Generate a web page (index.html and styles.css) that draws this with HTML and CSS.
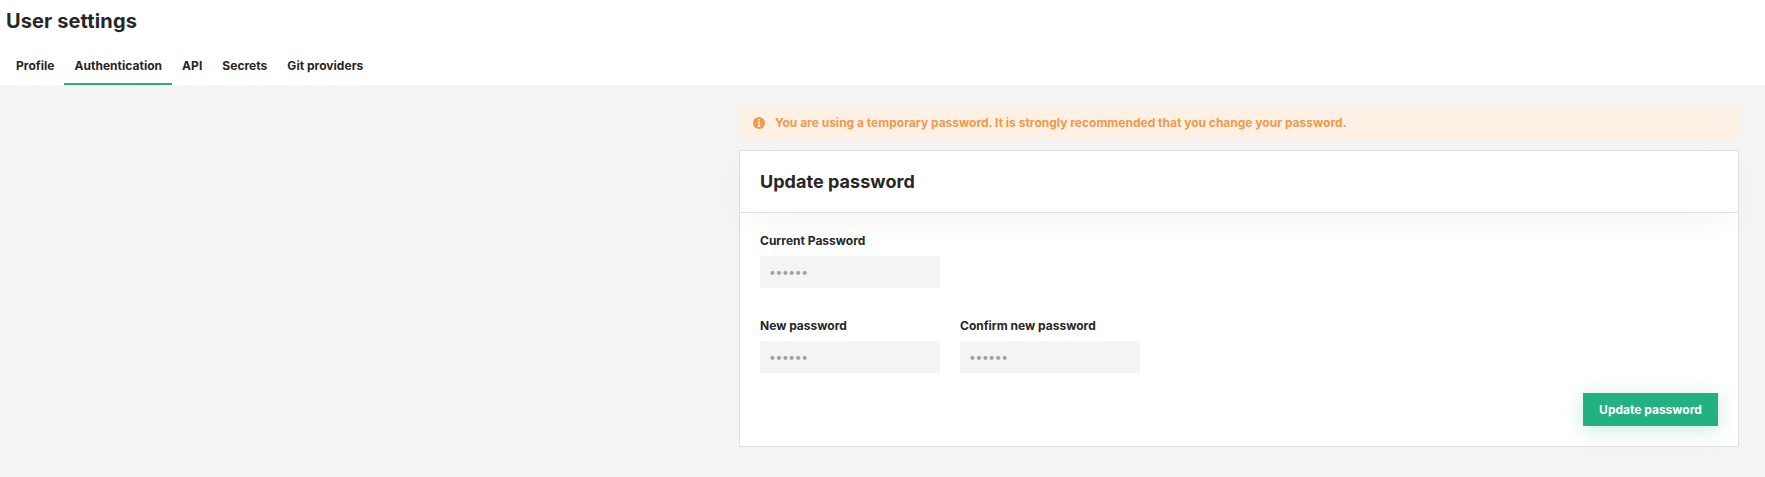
FILE: index.html
```html
<!DOCTYPE html>
<html lang="en">
<head>
<meta charset="utf-8">
<title>User settings</title>
<link rel="stylesheet" href="styles.css">
</head>
<body>
<header class="page-header">
  <h1 class="page-title">User settings</h1>
  <nav class="tabs">
    <a class="tab">Profile</a>
    <a class="tab tab-active">Authentication</a>
    <a class="tab">API</a>
    <a class="tab">Secrets</a>
    <a class="tab">Git providers</a>
  </nav>
</header>
<main class="content">
  <div class="alert">
    <svg class="alert-icon" viewBox="0 0 12 12" width="12" height="12"><circle cx="6" cy="6" r="6" fill="#f2994a"/><path d="M5.2 2h1.6v1.4H5.2zM4.6 4.3h2.2v4.7h.7v1H4.5v-1h.7V5.3h-.6z" fill="#fdf0e4"/></svg>
    <span>You are using a temporary password. It is strongly recommended that you change your password.</span>
  </div>
  <section class="card">
    <div class="card-header"><h2 class="card-title">Update password</h2></div>
    <form class="card-body">
      <div class="row">
        <label class="field"><span class="label">Current Password</span><input class="input" type="text" placeholder="••••••"></label>
      </div>
      <div class="row">
        <label class="field"><span class="label">New password</span><input class="input" type="text" placeholder="••••••"></label>
        <label class="field"><span class="label">Confirm new password</span><input class="input" type="text" placeholder="••••••"></label>
      </div>
      <div class="actions"><button class="button" type="button">Update password</button></div>
    </form>
  </section>
</main>
</body>
</html>
```
FILE: styles.css
```css
* { box-sizing: border-box; }
body {
  margin: 0;
  min-height: 100vh;
  background: #f4f4f4;
  color: #262626;
  font-family: Inter, sans-serif;
  font-size: 12px;
  font-weight: 700;
  line-height: 15px;
}
.page-header {
  display: flex;
  flex-direction: column;
  justify-content: space-between;
  height: 85px;
  padding-top: 9px;
  padding-left: 6px;
  background: #fff;
}
.page-title { margin: 0; font-size: 20px; font-weight: 700; line-height: 24px; letter-spacing: .12px; }
.tabs { display: flex; }
.tab { height: 28px; padding: 1px 10px 0; border-bottom: 2px solid transparent; letter-spacing: .03px; }
.tab-active { border-color: #23b083; }
.content { width: 1000px; margin-left: 739px; padding-top: 20px; }
.alert {
  display: flex;
  align-items: center;
  gap: 10px;
  height: 35px;
  margin-bottom: 10px;
  padding: 0 14px;
  background: #fdf0e4;
  color: #f2994a;
}
.alert-icon { flex: none; }
.card { height: 297px; border: 1px solid #e0e0e0; background: #fff; }
.card-header {
  display: flex;
  align-items: center;
  height: 62px;
  padding: 0 20px;
  border-bottom: 1px solid #e0e0e0;
  background: #fff;
  box-shadow: 0 12px 40px -12px rgba(0, 0, 0, .07);
}
.card-title { margin: 0; font-size: 18px; font-weight: 700; line-height: 22px; letter-spacing: .04px; }
.card-body { padding: 20px 20px 0; }
.row { display: flex; gap: 20px; margin-bottom: 30px; }
.field { display: flex; flex-direction: column; gap: 8px; width: 180px; }
.input {
  width: 180px;
  height: 32px;
  padding: 0 9px 2px;
  border: 0;
  border-radius: 0;
  background: #f4f4f4;
  font: 400 12px Inter, sans-serif;
  letter-spacing: -0.3px;
}
.input::placeholder { color: #9e9e9e; opacity: 1; }
.actions { display: flex; justify-content: flex-end; margin-top: -10px; }
.button {
  width: 135px;
  height: 33px;
  padding: 0;
  border: 0;
  background: #23b083;
  color: #fff;
  font: 700 12px Inter, sans-serif;
  box-shadow: 0 4px 20px rgba(35, 176, 131, .25);
}
```
